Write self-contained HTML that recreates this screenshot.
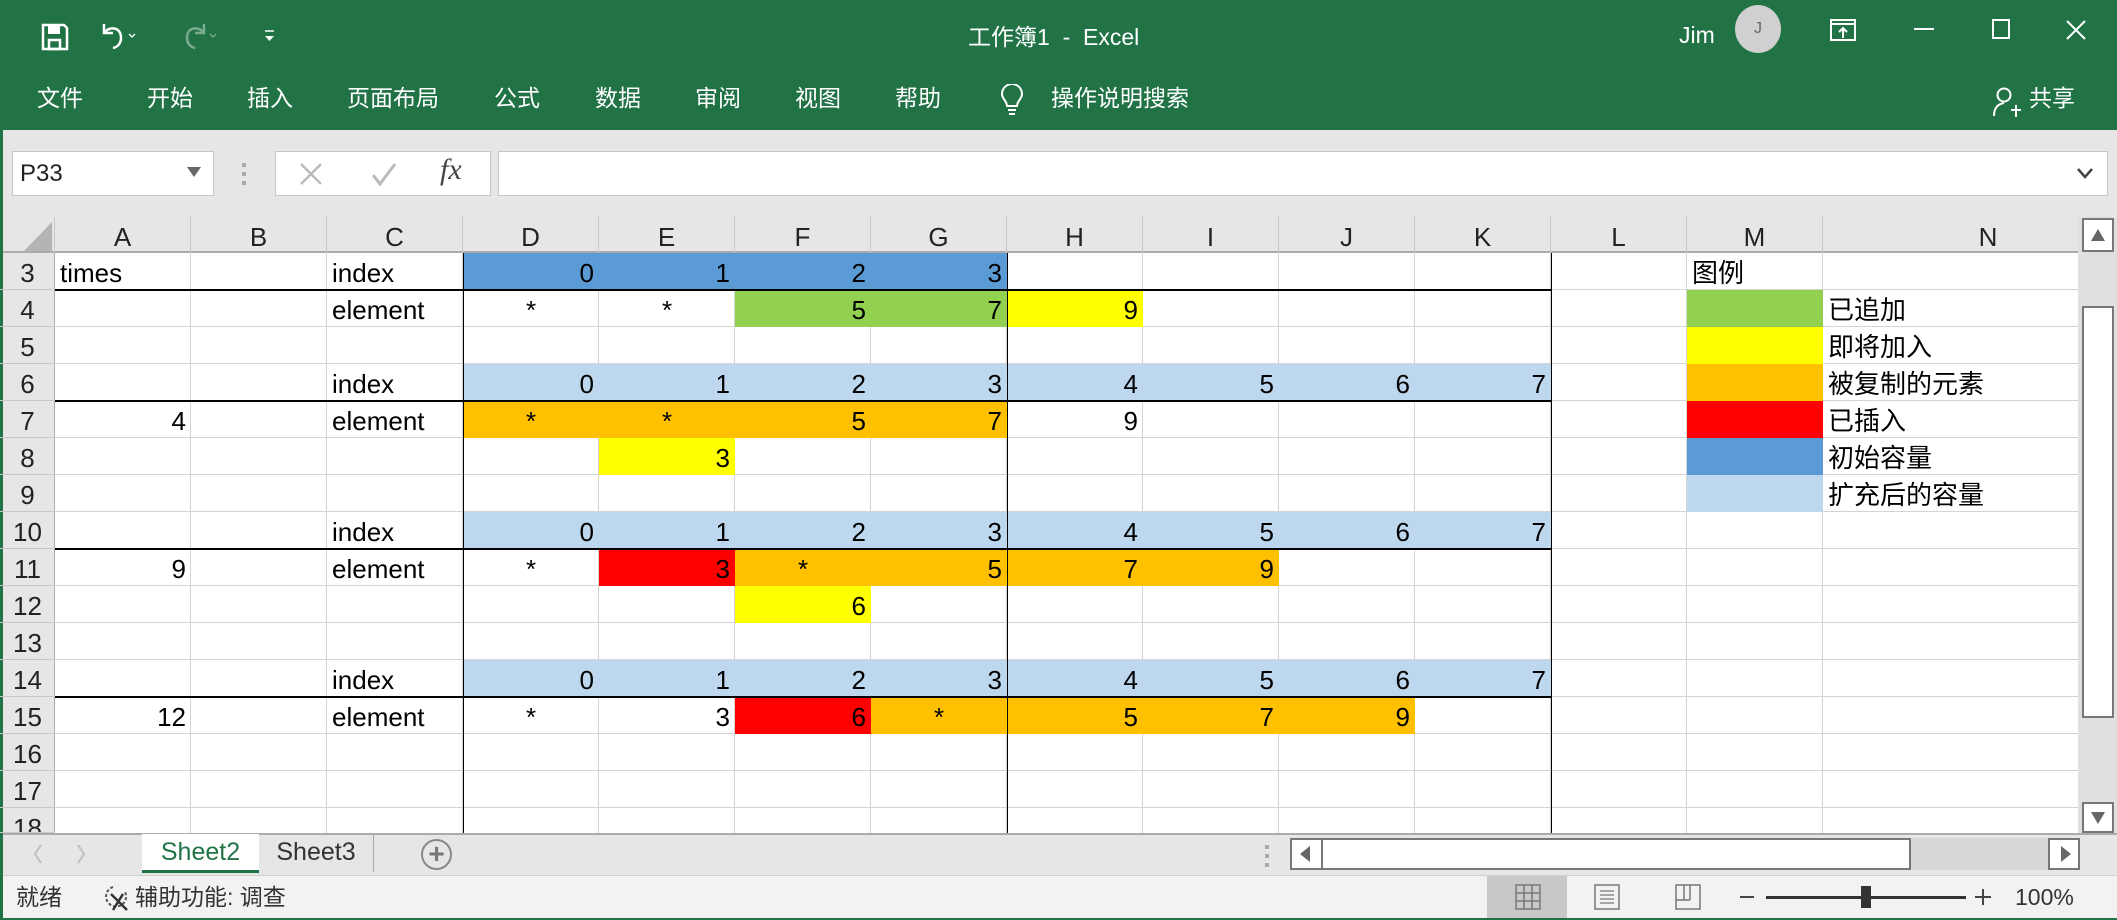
<!DOCTYPE html>
<html><head><meta charset="utf-8"><style>
*{margin:0;padding:0;box-sizing:border-box}
body{width:2117px;height:920px;overflow:hidden;background:#217346;font-family:"Liberation Sans","Noto Sans CJK SC",sans-serif;position:relative}
.a{position:absolute}
.w{color:#fff}
.tab{position:absolute;top:83px;font-size:23px;color:#fff;line-height:30px}
.c{position:absolute;height:37px;width:136px;line-height:40px;font-size:26px;padding:0 5px;color:#000;white-space:nowrap}
.r{text-align:right}.m{text-align:center}
.bl{background:#5B9BD5}.lb{background:#BDD7EE}.g{background:#92D050}.y{background:#FFFF00}.o{background:#FFC000}.rd{background:#FF0000}
.rh{position:absolute;left:0;width:55px;height:37px;line-height:40px;font-size:26px;text-align:center;color:#222;border-bottom:1px solid #c8c8c8}
.ch{position:absolute;top:217px;height:36px;width:136px;line-height:40px;font-size:26px;text-align:center;color:#222;border-right:1px solid #c8c8c8}
</style></head><body>
<div class="a" style="left:3px;top:130px;width:2114px;height:788px;background:#e6e6e6"></div>
<svg class="a" style="left:40px;top:22px" width="30" height="30" viewBox="0 0 30 30"><path d="M3 3h21l3 3v21H3z" fill="none" stroke="#fff" stroke-width="2.5"/><rect x="8" y="4" width="12" height="8" fill="#fff"/><rect x="9" y="18" width="11" height="9" fill="none" stroke="#fff" stroke-width="2.5"/></svg>
<svg class="a" style="left:98px;top:20px" width="40" height="32" viewBox="0 0 40 32"><path d="M6 4v9h9" fill="none" stroke="#fff" stroke-width="2.5"/><path d="M7 12c5-6 16-5 16 6 0 5-3 9-8 10" fill="none" stroke="#fff" stroke-width="2.5"/><path d="M31 14l3 3 3-3" fill="none" stroke="#fff" stroke-width="1.3"/></svg>
<svg class="a" style="left:178px;top:20px" width="40" height="32" viewBox="0 0 40 32" opacity=".4"><path d="M26 4v9h-9" fill="none" stroke="#fff" stroke-width="2.5"/><path d="M25 12c-5-6-16-5-16 6 0 5 3 9 8 10" fill="none" stroke="#fff" stroke-width="2.5"/><path d="M32 14l3 3 3-3" fill="none" stroke="#fff" stroke-width="1.3"/></svg>
<svg class="a" style="left:262px;top:28px" width="16" height="16" viewBox="0 0 16 16"><path d="M3 3h9" stroke="#fff" stroke-width="1.5"/><path d="M3 8h9l-4.5 5z" fill="#fff"/></svg>
<div class="a w" style="left:968px;top:22px;font-size:23px;line-height:30px">工作簿1&nbsp; -&nbsp; Excel</div>
<div class="a w" style="left:1679px;top:20px;font-size:23px;line-height:30px">Jim</div>
<div class="a" style="left:1735px;top:5px;width:46px;height:48px;border-radius:50%;background:#d0d0d0;color:#666;font-size:16px;text-align:center;line-height:48px">J</div>
<svg class="a" style="left:1830px;top:19px" width="26" height="22" viewBox="0 0 26 22"><rect x="1" y="1" width="24" height="20" fill="none" stroke="#fff" stroke-width="2"/><path d="M1 5h24M13 19V9M9 13l4-4 4 4" fill="none" stroke="#fff" stroke-width="2"/></svg>
<div class="a" style="left:1914px;top:28px;width:20px;height:2px;background:#fff"></div>
<div class="a" style="left:1992px;top:19px;width:18px;height:20px;border:2px solid #fff"></div>
<svg class="a" style="left:2065px;top:19px" width="22" height="22" viewBox="0 0 22 22"><path d="M2 2l18 18M20 2L2 20" stroke="#fff" stroke-width="2"/></svg>
<div class="tab" style="left:37px">文件</div><div class="tab" style="left:147px">开始</div><div class="tab" style="left:247px">插入</div><div class="tab" style="left:347px">页面布局</div><div class="tab" style="left:494px">公式</div><div class="tab" style="left:595px">数据</div><div class="tab" style="left:695px">审阅</div><div class="tab" style="left:795px">视图</div><div class="tab" style="left:895px">帮助</div>
<svg class="a" style="left:1000px;top:84px" width="24" height="34" viewBox="0 0 24 34"><path d="M7 22c0-5-5-7-5-12a10 10 0 0 1 20 0c0 5-5 7-5 12z" fill="none" stroke="#fff" stroke-width="2"/><path d="M8 26h8M9 30h6" stroke="#fff" stroke-width="2"/></svg>
<div class="tab" style="left:1051px">操作说明搜索</div>
<svg class="a" style="left:1992px;top:86px" width="30" height="32" viewBox="0 0 30 32"><circle cx="12" cy="9" r="6.5" fill="none" stroke="#fff" stroke-width="2"/><path d="M2 30c0-8 4-12 10-13" fill="none" stroke="#fff" stroke-width="2"/><path d="M19 24h10M24 19v12" stroke="#fff" stroke-width="2"/></svg>
<div class="tab" style="left:2029px">共享</div>
<div class="a" style="left:12px;top:151px;width:202px;height:45px;background:#fff;border:1px solid #c6c6c6;font-size:24px;line-height:43px;padding-left:7px;color:#222">P33</div>
<svg class="a" style="left:187px;top:167px" width="14" height="10"><path d="M0 0h14L7 10z" fill="#666"/></svg>
<div class="a" style="left:242px;top:163px;width:4px;height:4px;background:#aaa;box-shadow:0 9px 0 #aaa,0 18px 0 #aaa"></div>
<div class="a" style="left:275px;top:151px;width:216px;height:45px;background:#fff;border:1px solid #c6c6c6"></div>
<svg class="a" style="left:298px;top:161px" width="26" height="26"><path d="M3 3l20 20M23 3L3 23" stroke="#bbb" stroke-width="2.5"/></svg>
<svg class="a" style="left:370px;top:161px" width="28" height="26"><path d="M3 14l7 9L25 3" fill="none" stroke="#bbb" stroke-width="3"/></svg>
<div class="a" style="left:440px;top:153px;font-family:'Liberation Serif',serif;font-style:italic;font-size:30px;color:#444">fx</div>
<div class="a" style="left:498px;top:151px;width:1610px;height:45px;background:#fff;border:1px solid #c6c6c6"></div>
<svg class="a" style="left:2076px;top:166px" width="18" height="14"><path d="M2 3l7 8 7-8" fill="none" stroke="#444" stroke-width="2.5"/></svg>
<div class="a" style="left:3px;top:217px;width:2077px;height:36px;background:#e6e6e6;border-bottom:2px solid #ababab"></div>
<svg class="a" style="left:22px;top:220px" width="32" height="32"><path d="M30 2v29H2z" fill="#b4b4b4"/></svg>
<div class="a" style="left:54px;top:217px;width:1px;height:36px;background:#c8c8c8"></div>
<div class="ch" style="left:55px">A</div><div class="ch" style="left:191px">B</div><div class="ch" style="left:327px">C</div><div class="ch" style="left:463px">D</div><div class="ch" style="left:599px">E</div><div class="ch" style="left:735px">F</div><div class="ch" style="left:871px">G</div><div class="ch" style="left:1007px">H</div><div class="ch" style="left:1143px">I</div><div class="ch" style="left:1279px">J</div><div class="ch" style="left:1415px">K</div><div class="ch" style="left:1551px">L</div><div class="ch" style="left:1687px">M</div><div class="ch" style="left:1823px;width:330px;border-right:none">N</div>
<div class="a" style="left:55px;top:253px;width:2025px;height:580px;background-color:#fff;background-image:repeating-linear-gradient(to right,transparent 0 135px,#d4d4d4 135px 136px),repeating-linear-gradient(to bottom,transparent 0 36px,#d4d4d4 36px 37px);background-size:1768px 100%,100% 100%;background-repeat:no-repeat,repeat"></div>
<div class="a" style="left:3px;top:253px;width:52px;height:580px;background:#e6e6e6;border-right:1px solid #ababab"></div>
<div class="rh" style="top:253px">3</div><div class="rh" style="top:290px">4</div><div class="rh" style="top:327px">5</div><div class="rh" style="top:364px">6</div><div class="rh" style="top:401px">7</div><div class="rh" style="top:438px">8</div><div class="rh" style="top:475px">9</div><div class="rh" style="top:512px">10</div><div class="rh" style="top:549px">11</div><div class="rh" style="top:586px">12</div><div class="rh" style="top:623px">13</div><div class="rh" style="top:660px">14</div><div class="rh" style="top:697px">15</div><div class="rh" style="top:734px">16</div><div class="rh" style="top:771px">17</div><div class="rh" style="top:808px;height:25px;overflow:hidden">18</div>
<div class="c" style="left:55px;top:253px">times</div><div class="c" style="left:327px;top:253px">index</div>
<div class="c r bl" style="left:463px;top:253px">0</div><div class="c r bl" style="left:599px;top:253px">1</div><div class="c r bl" style="left:735px;top:253px">2</div><div class="c r bl" style="left:871px;top:253px">3</div>
<div class="c" style="left:1687px;top:253px">图例</div>
<div class="c" style="left:327px;top:290px">element</div>
<div class="c m" style="left:463px;top:290px">*</div><div class="c m" style="left:599px;top:290px">*</div>
<div class="c r g" style="left:735px;top:290px">5</div><div class="c r g" style="left:871px;top:290px">7</div><div class="c r y" style="left:1007px;top:290px">9</div>
<div class="c" style="left:327px;top:364px">index</div>
<div class="c r lb" style="left:463px;top:364px">0</div><div class="c r lb" style="left:599px;top:364px">1</div><div class="c r lb" style="left:735px;top:364px">2</div><div class="c r lb" style="left:871px;top:364px">3</div><div class="c r lb" style="left:1007px;top:364px">4</div><div class="c r lb" style="left:1143px;top:364px">5</div><div class="c r lb" style="left:1279px;top:364px">6</div><div class="c r lb" style="left:1415px;top:364px">7</div>
<div class="c r" style="left:55px;top:401px">4</div><div class="c" style="left:327px;top:401px">element</div>
<div class="c m o" style="left:463px;top:401px">*</div><div class="c m o" style="left:599px;top:401px">*</div><div class="c r o" style="left:735px;top:401px">5</div><div class="c r o" style="left:871px;top:401px">7</div><div class="c r" style="left:1007px;top:401px">9</div>
<div class="c r y" style="left:599px;top:438px">3</div>
<div class="c" style="left:327px;top:512px">index</div>
<div class="c r lb" style="left:463px;top:512px">0</div><div class="c r lb" style="left:599px;top:512px">1</div><div class="c r lb" style="left:735px;top:512px">2</div><div class="c r lb" style="left:871px;top:512px">3</div><div class="c r lb" style="left:1007px;top:512px">4</div><div class="c r lb" style="left:1143px;top:512px">5</div><div class="c r lb" style="left:1279px;top:512px">6</div><div class="c r lb" style="left:1415px;top:512px">7</div>
<div class="c r" style="left:55px;top:549px">9</div><div class="c" style="left:327px;top:549px">element</div>
<div class="c m" style="left:463px;top:549px">*</div><div class="c r rd" style="left:599px;top:549px">3</div><div class="c m o" style="left:735px;top:549px">*</div><div class="c r o" style="left:871px;top:549px">5</div><div class="c r o" style="left:1007px;top:549px">7</div><div class="c r o" style="left:1143px;top:549px">9</div>
<div class="c r y" style="left:735px;top:586px">6</div>
<div class="c" style="left:327px;top:660px">index</div>
<div class="c r lb" style="left:463px;top:660px">0</div><div class="c r lb" style="left:599px;top:660px">1</div><div class="c r lb" style="left:735px;top:660px">2</div><div class="c r lb" style="left:871px;top:660px">3</div><div class="c r lb" style="left:1007px;top:660px">4</div><div class="c r lb" style="left:1143px;top:660px">5</div><div class="c r lb" style="left:1279px;top:660px">6</div><div class="c r lb" style="left:1415px;top:660px">7</div>
<div class="c r" style="left:55px;top:697px">12</div><div class="c" style="left:327px;top:697px">element</div>
<div class="c m" style="left:463px;top:697px">*</div><div class="c r" style="left:599px;top:697px">3</div><div class="c r rd" style="left:735px;top:697px">6</div><div class="c m o" style="left:871px;top:697px">*</div><div class="c r o" style="left:1007px;top:697px">5</div><div class="c r o" style="left:1143px;top:697px">7</div><div class="c r o" style="left:1279px;top:697px">9</div>
<div class="c g" style="left:1687px;top:290px"></div><div class="c" style="left:1823px;top:290px">已追加</div>
<div class="c y" style="left:1687px;top:327px"></div><div class="c" style="left:1823px;top:327px">即将加入</div>
<div class="c o" style="left:1687px;top:364px"></div><div class="c" style="left:1823px;top:364px">被复制的元素</div>
<div class="c rd" style="left:1687px;top:401px"></div><div class="c" style="left:1823px;top:401px">已插入</div>
<div class="c bl" style="left:1687px;top:438px"></div><div class="c" style="left:1823px;top:438px">初始容量</div>
<div class="c lb" style="left:1687px;top:475px"></div><div class="c" style="left:1823px;top:475px">扩充后的容量</div>
<div class="a" style="left:55px;top:289px;width:1497px;height:2px;background:#000"></div>
<div class="a" style="left:55px;top:400px;width:1497px;height:2px;background:#000"></div>
<div class="a" style="left:55px;top:548px;width:1497px;height:2px;background:#000"></div>
<div class="a" style="left:55px;top:696px;width:1497px;height:2px;background:#000"></div>
<div class="a" style="left:463px;top:253px;width:1px;height:580px;background:#000"></div>
<div class="a" style="left:1007px;top:253px;width:1px;height:580px;background:#000"></div>
<div class="a" style="left:1551px;top:253px;width:1px;height:580px;background:#000"></div>
<div class="a" style="left:2078px;top:217px;width:39px;height:616px;background:#e0e0e0"></div>
<div class="a" style="left:2082px;top:218px;width:32px;height:34px;background:#fff;border:2px solid #777"></div>
<svg class="a" style="left:2090px;top:228px" width="16" height="14"><path d="M8 1l7 12H1z" fill="#666"/></svg>
<div class="a" style="left:2082px;top:306px;width:32px;height:412px;background:#fff;border:2px solid #777"></div>
<div class="a" style="left:2082px;top:802px;width:32px;height:31px;background:#fff;border:2px solid #777"></div>
<svg class="a" style="left:2090px;top:811px" width="16" height="14"><path d="M8 13L15 1H1z" fill="#666"/></svg>
<div class="a" style="left:3px;top:833px;width:2114px;height:42px;background:#e6e6e6;border-top:2px solid #ababab"></div>
<svg class="a" style="left:30px;top:843px" width="60" height="22"><path d="M11 2L5 11l6 9M48 2l6 9-6 9" fill="none" stroke="#c0c0c0" stroke-width="2"/></svg>
<div class="a" style="left:142px;top:834px;width:117px;height:39px;background:#fff;border-bottom:3px solid #217346;color:#217346;font-size:25px;text-align:center;line-height:36px">Sheet2</div>
<div class="a" style="left:259px;top:834px;width:115px;height:38px;color:#333;font-size:25px;text-align:center;line-height:36px;border-right:1px solid #aaa">Sheet3</div>
<div class="a" style="left:421px;top:839px;width:31px;height:31px;border:2px solid #888;border-radius:50%;color:#777;font-size:28px;line-height:26px;text-align:center;font-weight:bold">+</div>
<div class="a" style="left:1265px;top:845px;width:4px;height:4px;background:#aaa;box-shadow:0 9px 0 #aaa,0 18px 0 #aaa"></div>
<div class="a" style="left:1290px;top:838px;width:790px;height:32px;background:#d8d8d8"></div>
<div class="a" style="left:1290px;top:838px;width:33px;height:32px;background:#fff;border:2px solid #777"></div>
<svg class="a" style="left:1299px;top:845px" width="12" height="18"><path d="M1 9L11 1v16z" fill="#666"/></svg>
<div class="a" style="left:1321px;top:838px;width:590px;height:32px;background:#fff;border:2px solid #777"></div>
<div class="a" style="left:2048px;top:838px;width:32px;height:32px;background:#fff;border:2px solid #777"></div>
<svg class="a" style="left:2060px;top:845px" width="12" height="18"><path d="M11 9L1 1v16z" fill="#666"/></svg>
<div class="a" style="left:3px;top:875px;width:2114px;height:43px;background:#f2f2f2;border-top:1px solid #d0d0d0"></div>
<div class="a" style="left:16px;top:882px;font-size:23px;color:#333;line-height:30px">就绪</div>
<svg class="a" style="left:103px;top:884px" width="26" height="28"><path d="M10 3a10 10 0 1 0 12 5" fill="none" stroke="#555" stroke-width="2" stroke-dasharray="3 2"/><path d="M8 10l16 16M20 10L10 26" stroke="#333" stroke-width="2.5"/></svg>
<div class="a" style="left:135px;top:882px;font-size:23px;color:#333;line-height:30px">辅助功能: 调查</div>
<div class="a" style="left:1487px;top:876px;width:80px;height:42px;background:#c8c8c8"></div>
<svg class="a" style="left:1515px;top:884px" width="26" height="26"><path d="M1 1h24v24H1zM1 9h24M1 17h24M9 1v24M17 1v24" fill="none" stroke="#777" stroke-width="1.5"/></svg>
<svg class="a" style="left:1594px;top:884px" width="26" height="26"><path d="M1 1h24v24H1z" fill="none" stroke="#777" stroke-width="1.5"/><path d="M6 7h14M6 11h14M6 15h14M6 19h14" stroke="#777" stroke-width="1.2"/></svg>
<svg class="a" style="left:1675px;top:884px" width="26" height="26"><path d="M1 1h24v24H1zM1 16h14M15 1v15M9 1v15" fill="none" stroke="#777" stroke-width="1.5"/></svg>
<div class="a" style="left:1740px;top:896px;width:14px;height:2px;background:#444"></div>
<div class="a" style="left:1766px;top:896px;width:200px;height:3px;background:#333"></div>
<div class="a" style="left:1861px;top:886px;width:10px;height:22px;background:#333"></div>
<div class="a" style="left:1975px;top:896px;width:16px;height:2px;background:#444"></div>
<div class="a" style="left:1982px;top:889px;width:2px;height:16px;background:#444"></div>
<div class="a" style="left:2015px;top:882px;font-size:23px;color:#333;line-height:30px">100%</div>
</body></html>
